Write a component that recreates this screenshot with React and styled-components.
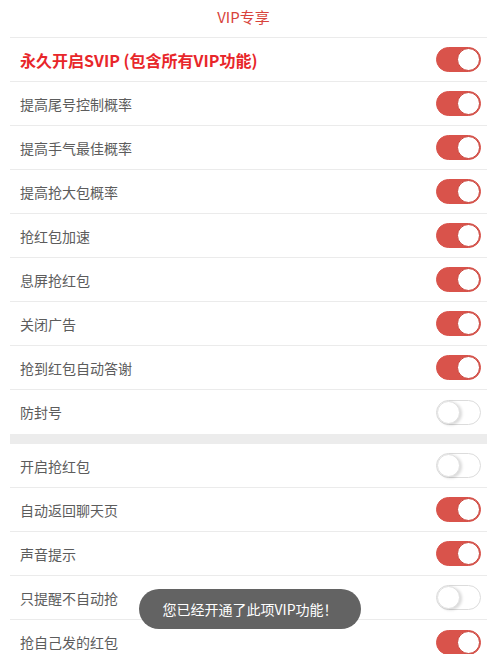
import React, { useState } from 'react'
import styled, { createGlobalStyle } from 'styled-components'

const GlobalStyle = createGlobalStyle`
  body {
    margin: 0;
    background: #ffffff;
    font-family: "Noto Sans CJK SC", "Noto Sans", sans-serif;
    overflow: hidden;
  }
`

const vipItems = [
  { label: '永久开启SVIP (包含所有VIP功能)', on: true, highlight: true },
  { label: '提高尾号控制概率', on: true },
  { label: '提高手气最佳概率', on: true },
  { label: '提高抢大包概率', on: true },
  { label: '抢红包加速', on: true },
  { label: '息屏抢红包', on: true },
  { label: '关闭广告', on: true },
  { label: '抢到红包自动答谢', on: true },
  { label: '防封号', on: false },
]

const baseItems = [
  { label: '开启抢红包', on: false },
  { label: '自动返回聊天页', on: true },
  { label: '声音提示', on: true },
  { label: '只提醒不自动抢', on: false },
  { label: '抢自己发的红包', on: true },
]

function Toggle({ on, onClick }) {
  return (
    <Track $on={on} onClick={onClick}>
      <Knob $on={on} />
    </Track>
  )
}

function Section({ items }) {
  const [state, setState] = useState(items.map(i => i.on))
  return (
    <List>
      {items.map((item, idx) => (
        <Row key={item.label}>
          <Label $highlight={item.highlight}>{item.label}</Label>
          <Toggle
            on={state[idx]}
            onClick={() => setState(s => s.map((v, j) => (j === idx ? !v : v)))}
          />
        </Row>
      ))}
    </List>
  )
}

export default function App() {
  return (
    <>
      <GlobalStyle />
      <Page>
        <Header>VIP专享</Header>
        <Section items={vipItems} />
        <Gap />
        <Section items={baseItems} />
      </Page>
      <Toast>您已经开通了此项VIP功能！</Toast>
    </>
  )
}

const Page = styled.div`
  padding-left: 10px;
`

const Header = styled.div`
  height: 38px;
  line-height: 34px;
  text-align: center;
  margin-left: -10px;
  font-size: 15px;
  color: #d8433b;
  position: relative;
  &::after {
    content: '';
    position: absolute;
    left: 10px;
    right: 0;
    bottom: 0;
    height: 1px;
    background: #ebebeb;
  }
`

const List = styled.div`
  display: flex;
  flex-direction: column;
`

const Row = styled.div`
  height: 44px;
  box-sizing: border-box;
  display: flex;
  align-items: center;
  justify-content: space-between;
  padding: 0 6px 0 10px;
  border-bottom: 1px solid #ebebeb;
  &:last-child {
    border-bottom: none;
  }
`

const Label = styled.span`
  font-size: ${p => (p.$highlight ? '16px' : '14px')};
  font-weight: ${p => (p.$highlight ? 700 : 400)};
  color: ${p => (p.$highlight ? '#e8262a' : '#5c5c5c')};
`

const Gap = styled.div`
  height: 10px;
  background: #ececec;
`

const Track = styled.div`
  width: 45px;
  height: 25px;
  box-sizing: border-box;
  border-radius: 13px;
  border: 1px solid ${p => (p.$on ? '#d9534b' : '#dcdcdc')};
  background: ${p => (p.$on ? '#d9534b' : '#ffffff')};
  display: flex;
  justify-content: ${p => (p.$on ? 'flex-end' : 'flex-start')};
  align-items: center;
  cursor: pointer;
`

const Knob = styled.div`
  width: 23px;
  height: 23px;
  box-sizing: border-box;
  border-radius: 50%;
  background: #ffffff;
  border: 1px solid ${p => (p.$on ? '#c9443c' : '#e0e0e0')};
  box-shadow: ${p => (p.$on ? 'none' : '2px 1px 3px rgba(0,0,0,0.15)')};
`

const Toast = styled.div`
  position: fixed;
  left: 139px;
  top: 589px;
  width: 222px;
  height: 40px;
  border-radius: 20px;
  background: #636363;
  color: #ffffff;
  font-size: 14px;
  display: flex;
  align-items: center;
  justify-content: center;
`
